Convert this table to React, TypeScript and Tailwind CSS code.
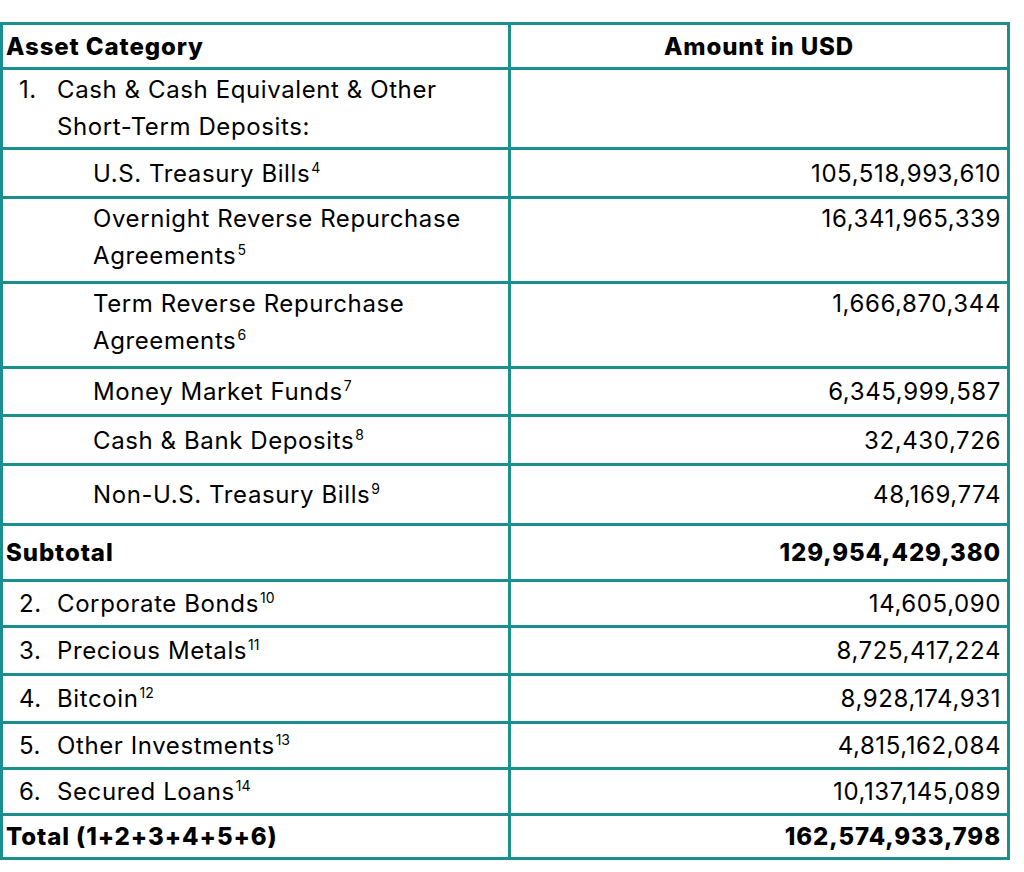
import React from "react";

type Row = {
  kind: "num" | "sub" | "bold";
  num?: string;
  label: React.ReactNode;
  amount?: string;
  h: string;
  multi?: boolean;
};

const Sup = ({ children }: { children: React.ReactNode }) => (
  <sup className="text-[14px] relative -top-[9px] ml-[1px] tracking-normal">{children}</sup>
);

const rows: Row[] = [
  { kind: "num", num: "1.", label: <>Cash &amp; Cash Equivalent &amp; Other<br />Short-Term Deposits:</>, h: "h-[80px]", multi: true },
  { kind: "sub", label: <>U.S. Treasury Bills<Sup>4</Sup></>, amount: "105,518,993,610", h: "h-[49px]" },
  { kind: "sub", label: <>Overnight Reverse Repurchase<br />Agreements<Sup>5</Sup></>, amount: "16,341,965,339", h: "h-[85px]", multi: true },
  { kind: "sub", label: <>Term Reverse Repurchase<br />Agreements<Sup>6</Sup></>, amount: "1,666,870,344", h: "h-[85px]", multi: true },
  { kind: "sub", label: <>Money Market Funds<Sup>7</Sup></>, amount: "6,345,999,587", h: "h-[48px]" },
  { kind: "sub", label: <>Cash &amp; Bank Deposits<Sup>8</Sup></>, amount: "32,430,726", h: "h-[49px]" },
  { kind: "sub", label: <>Non-U.S. Treasury Bills<Sup>9</Sup></>, amount: "48,169,774", h: "h-[60px]" },
  { kind: "bold", label: <>Subtotal</>, amount: "129,954,429,380", h: "h-[56px]" },
  { kind: "num", num: "2.", label: <>Corporate Bonds<Sup>10</Sup></>, amount: "14,605,090", h: "h-[46px]" },
  { kind: "num", num: "3.", label: <>Precious Metals<Sup>11</Sup></>, amount: "8,725,417,224", h: "h-[48px]" },
  { kind: "num", num: "4.", label: <>Bitcoin<Sup>12</Sup></>, amount: "8,928,174,931", h: "h-[48px]" },
  { kind: "num", num: "5.", label: <>Other Investments<Sup>13</Sup></>, amount: "4,815,162,084", h: "h-[46px]" },
  { kind: "num", num: "6.", label: <>Secured Loans<Sup>14</Sup></>, amount: "10,137,145,089", h: "h-[46px]" },
  { kind: "bold", label: <>Total (1+2+3+4+5+6)</>, amount: "162,574,933,798", h: "h-[44px]" },
];

export default function App() {
  return (
    <div
      className="bg-white w-[1024px] h-[872px] pt-[22px] text-black"
      style={{ fontFamily: "Inter, 'Noto Sans', sans-serif" }}
    >
      <div className="w-[1010px] border-[3px] border-[#1b8f8f] text-[24px] leading-[37px] tracking-[0.6px]">
        <div className="grid grid-cols-[508px_1fr] h-[42px] font-extrabold tracking-[0.9px]">
          <div className="border-r-[3px] border-[#1b8f8f] pl-[3px] flex items-center">Asset Category</div>
          <div className="flex items-center justify-center">Amount in USD</div>
        </div>
        {rows.map((r, i) => (
          <div
            key={i}
            className={`grid grid-cols-[508px_1fr] border-t-[3px] border-[#1b8f8f] ${r.h} ${
              r.kind === "bold" ? "font-extrabold tracking-[0.9px]" : ""
            }`}
          >
            <div
              className={`border-r-[3px] border-[#1b8f8f] flex ${r.multi ? "items-start pt-[1px]" : "items-center"} ${
                r.kind === "num" ? "pl-[16px]" : r.kind === "sub" ? "pl-[90px]" : "pl-[3px]"
              }`}
            >
              {r.kind === "num" ? (
                <>
                  <span className="w-[38px] shrink-0">{r.num}</span>
                  <span>{r.label}</span>
                </>
              ) : (
                <span>{r.label}</span>
              )}
            </div>
            <div className={`flex justify-end pr-[6px] ${r.multi ? "items-start pt-[1px]" : "items-center"}`}>
              {r.amount}
            </div>
          </div>
        ))}
      </div>
    </div>
  );
}
